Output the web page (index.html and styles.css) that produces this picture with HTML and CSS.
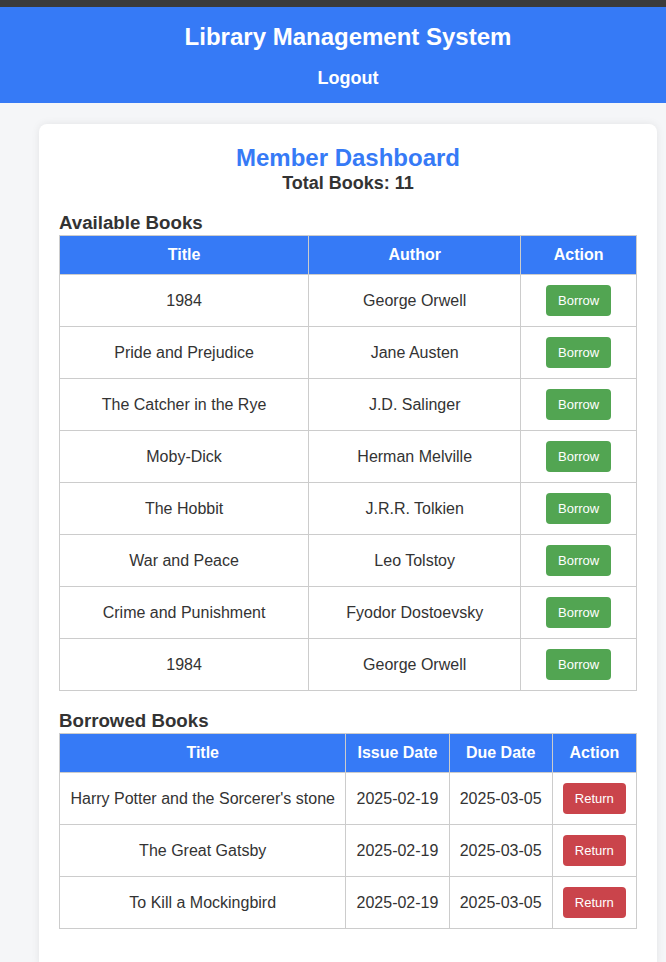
FILE: index.html
```html
<!DOCTYPE html>
<html>
<head>
<meta charset="utf-8">
<link rel="stylesheet" href="styles.css">
</head>
<body>
<div class="topbar"></div>
<header class="header">
  <h1 class="title">Library Management System</h1>
  <a class="logout">Logout</a>
</header>
<main class="card">
  <h2 class="dash-title">Member Dashboard</h2>
  <p class="total">Total Books: 11</p>

  <h3 class="section-title">Available Books</h3>
  <table class="tbl">
    <thead><tr><th>Title</th><th>Author</th><th>Action</th></tr></thead>
    <tbody>
      <tr><td>1984</td><td>George Orwell</td><td><button class="btn borrow">Borrow</button></td></tr>
      <tr><td>Pride and Prejudice</td><td>Jane Austen</td><td><button class="btn borrow">Borrow</button></td></tr>
      <tr><td>The Catcher in the Rye</td><td>J.D. Salinger</td><td><button class="btn borrow">Borrow</button></td></tr>
      <tr><td>Moby-Dick</td><td>Herman Melville</td><td><button class="btn borrow">Borrow</button></td></tr>
      <tr><td>The Hobbit</td><td>J.R.R. Tolkien</td><td><button class="btn borrow">Borrow</button></td></tr>
      <tr><td>War and Peace</td><td>Leo Tolstoy</td><td><button class="btn borrow">Borrow</button></td></tr>
      <tr><td>Crime and Punishment</td><td>Fyodor Dostoevsky</td><td><button class="btn borrow">Borrow</button></td></tr>
      <tr><td>1984</td><td>George Orwell</td><td><button class="btn borrow">Borrow</button></td></tr>
    </tbody>
  </table>

  <h3 class="section-title second">Borrowed Books</h3>
  <table class="tbl">
    <thead><tr><th>Title</th><th>Issue Date</th><th>Due Date</th><th>Action</th></tr></thead>
    <tbody>
      <tr><td>Harry Potter and the Sorcerer's stone</td><td>2025-02-19</td><td>2025-03-05</td><td><button class="btn return">Return</button></td></tr>
      <tr><td>The Great Gatsby</td><td>2025-02-19</td><td>2025-03-05</td><td><button class="btn return">Return</button></td></tr>
      <tr><td>To Kill a Mockingbird</td><td>2025-02-19</td><td>2025-03-05</td><td><button class="btn return">Return</button></td></tr>
    </tbody>
  </table>
</main>
</body>
</html>
```
FILE: styles.css
```css
* { box-sizing: border-box; }
html, body { margin: 0; padding: 0; }
body {
  background: #f5f6f8;
  font-family: "Liberation Sans", Arial, Helvetica, sans-serif;
  color: #333;
}
.topbar { height: 7px; background: #3b3b3b; }
.header {
  background: #367af6;
  color: #fff;
  text-align: center;
  height: 96px;
  display: flex;
  flex-direction: column;
  align-items: center;
  padding: 16px 0 0 30px;
}
.title {
  margin: 0;
  font-size: 24px;
  line-height: 28px;
  font-weight: bold;
}
.logout {
  margin-top: 16px;
  font-size: 18px;
  line-height: 22px;
  font-weight: bold;
  color: #fff;
}
.card {
  margin: 21px 0 0 39px;
  width: 618px;
  background: #fff;
  border-radius: 8px;
  padding: 20px 20px 40px;
  box-shadow: 0 0 8px rgba(0,0,0,0.08);
  text-align: center;
}
.dash-title {
  margin: 0;
  font-size: 24px;
  line-height: 28px;
  color: #367af6;
}
.total {
  margin: 0;
  font-size: 18px;
  line-height: 22px;
  font-weight: bold;
  color: #333;
}
.section-title {
  text-align: left;
  margin: 18px 0 1px;
  font-size: 18.7px;
  line-height: 22px;
  font-weight: bold;
  color: #333;
}
.section-title.second { margin-top: 19px; }
.tbl {
  width: 100%;
  border-collapse: collapse;
  font-size: 16px;
}
.tbl th, .tbl td {
  border: 1px solid #ccc;
  padding: 10px;
  text-align: center;
  line-height: 18px;
}
.tbl th {
  background: #367af6;
  color: #fff;
  font-weight: bold;
}
.tbl td { color: #333; }
.btn {
  font-family: "Liberation Sans", Arial, Helvetica, sans-serif;
  font-size: 13px;
  line-height: 15px;
  padding: 8px 12px;
  border: none;
  border-radius: 4px;
  color: #fff;
  vertical-align: middle;
}
.borrow { background: #52a552; }
.return { background: #ca444b; }
```
